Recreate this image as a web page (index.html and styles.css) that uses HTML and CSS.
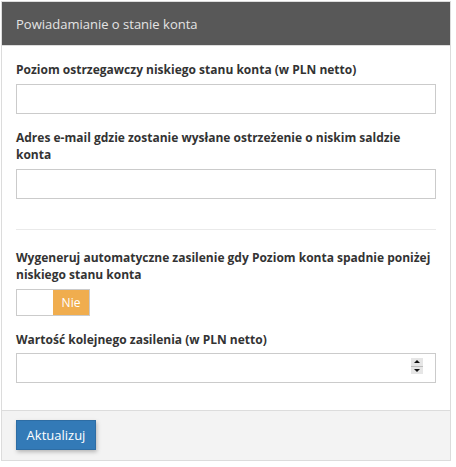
FILE: index.html
```html
<!DOCTYPE html>
<html lang="pl">
<head>
<meta charset="utf-8">
<title>Powiadamianie o stanie konta</title>
<link rel="stylesheet" href="styles.css">
</head>
<body>
<div class="panel">
  <div class="panel-heading">Powiadamianie o stanie konta</div>
  <div class="panel-body">
    <div class="form-group">
      <label class="label">Poziom ostrzegawczy niskiego stanu konta (w PLN netto)</label>
      <input class="form-control" type="text">
    </div>
    <div class="form-group">
      <label class="label">Adres e-mail gdzie zostanie wysłane ostrzeżenie o niskim saldzie konta</label>
      <input class="form-control" type="text">
    </div>
    <hr class="divider">
    <div class="form-group">
      <label class="label">Wygeneruj automatyczne zasilenie gdy Poziom konta spadnie poniżej niskiego stanu konta</label>
      <div class="switch"><span class="sw-blank"></span><span class="sw-on">Nie</span></div>
    </div>
    <div class="form-group">
      <label class="label">Wartość kolejnego zasilenia (w PLN netto)</label>
      <div class="num-wrap">
        <input class="form-control" type="text">
        <span class="spinner"><span class="sp-up"></span><span class="sp-down"></span></span>
      </div>
    </div>
  </div>
  <div class="panel-footer"><button class="btn" type="button">Aktualizuj</button></div>
</div>
</body>
</html>
```

FILE: styles.css
```css
* { box-sizing: border-box; }
html, body { margin: 0; padding: 0; background: #fff; }
body { font-family: "Open Sans", "Noto Sans", sans-serif; color: #333; }

.panel {
  margin: 1px 0 0 1px;
  width: 450px;
  border: 1px solid #dcdcdc;
}
.panel-heading {
  height: 44px;
  background: #585858;
  color: #e4e4e4;
  font-size: 13px;
  line-height: 44px;
  padding: 0 14px;
  border-bottom: 1px solid #dcdcdc;
}
.panel-body {
  display: flex;
  flex-direction: column;
  padding: 15px 14px 12px 14px;
}
.form-group { margin-bottom: 15px; }
.label {
  display: block;
  font-size: 12px;
  font-weight: 700;
  line-height: 17.5px;
  margin-bottom: 5px;
  color: #333;
}
.form-control {
  display: block;
  width: 100%;
  height: 30px;
  border: 1px solid #cbcbcb;
  border-radius: 0;
  background: #fff;
  margin: 0;
  padding: 0 8px;
  font-family: inherit;
  font-size: 13px;
}
.divider {
  width: 100%;
  border: 0;
  border-top: 1px solid #eaeaea;
  margin: 15px 0 19px 0;
}
.switch {
  display: flex;
  width: 74px;
  height: 27px;
  border: 1px solid #cbcbcb;
}
.sw-blank { flex: 1; background: #fff; }
.sw-on {
  width: 36px;
  background: #f0ad4e;
  color: #fff;
  font-size: 12px;
  line-height: 25px;
  text-align: center;
}
.num-wrap { position: relative; }
.spinner {
  position: absolute;
  right: 13px;
  top: 5px;
  width: 12px;
  height: 16px;
  background: #e6e6e6;
  display: flex;
  flex-direction: column;
}
.sp-up, .sp-down {
  flex: 1;
  position: relative;
}
.sp-up { border-bottom: 1px solid #bdbdbd; }
.sp-up::after, .sp-down::after {
  content: "";
  position: absolute;
  left: 3px;
  width: 0;
  height: 0;
  border-left: 3px solid transparent;
  border-right: 3px solid transparent;
}
.sp-up::after { top: 2px; border-bottom: 3px solid #111; }
.sp-down::after { top: 2px; border-top: 3px solid #111; }
.panel-footer {
  background: #f3f3f3;
  border-top: 1px solid #dcdcdc;
  padding: 9px 14px 10px 14px;
}
.btn {
  display: block;
  width: 80px;
  height: 30px;
  background: #337ab7;
  border: 1px solid #2e6da4;
  border-radius: 0;
  color: #fff;
  font-family: inherit;
  font-size: 13px;
  padding: 0;
  box-shadow: 1px 2px 4px rgba(0,0,0,0.25);
}
```
